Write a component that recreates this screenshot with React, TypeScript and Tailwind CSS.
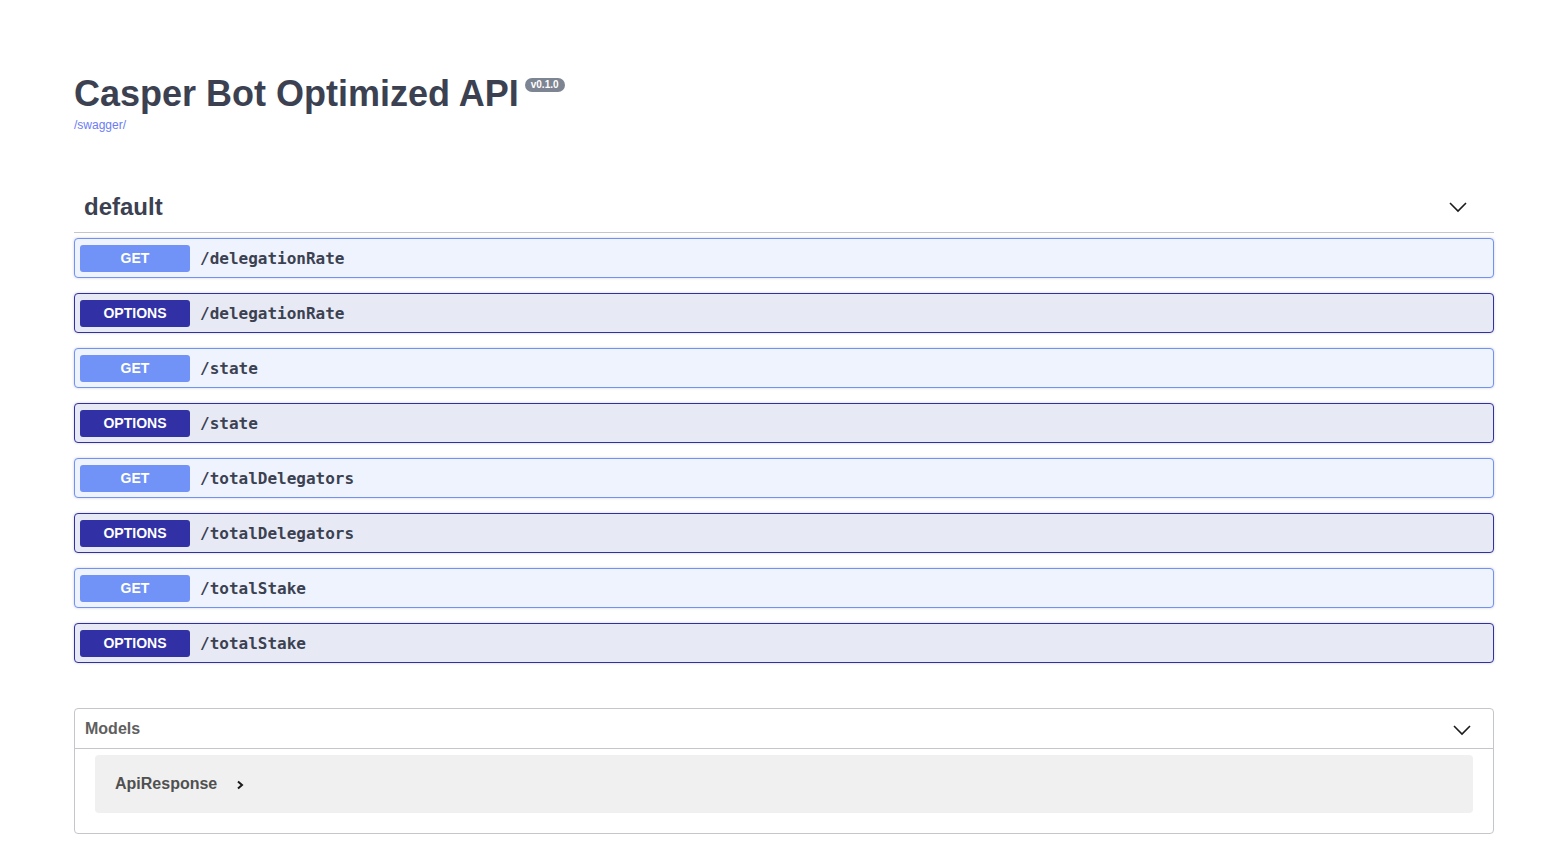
import React from 'react';

const sans = { fontFamily: '"Liberation Sans", Arial, sans-serif' };

type Op = { method: 'GET' | 'OPTIONS'; path: string };

const ops: Op[] = [
  { method: 'GET', path: '/delegationRate' },
  { method: 'OPTIONS', path: '/delegationRate' },
  { method: 'GET', path: '/state' },
  { method: 'OPTIONS', path: '/state' },
  { method: 'GET', path: '/totalDelegators' },
  { method: 'OPTIONS', path: '/totalDelegators' },
  { method: 'GET', path: '/totalStake' },
  { method: 'OPTIONS', path: '/totalStake' },
];

function ChevronDown({ className }: { className?: string }) {
  return (
    <svg viewBox="0 0 20 20" className={className} fill="none" stroke="currentColor" strokeWidth="1.6">
      <path d="M2 6 L10 14 L18 6" />
    </svg>
  );
}

function OpBlock({ op }: { op: Op }) {
  const isGet = op.method === 'GET';
  return (
    <div
      className={
        'flex h-10 items-center rounded-[4px] border px-[5px] shadow-[0_0_3px_rgba(0,0,0,0.19)] ' +
        (isGet ? 'border-[#7091f5] bg-[#eff3fe]' : 'border-[#3131a5] bg-[#e7eaf5]')
      }
    >
      <span
        className={
          'flex h-[27px] w-[110px] items-center justify-center rounded-[3px] text-[14px] font-bold text-white ' +
          (isGet ? 'bg-[#7193f7]' : 'bg-[#3131a5]')
        }
        style={sans}
      >
        {op.method}
      </span>
      <span
        className="ml-[10px] pt-[2px] text-[16px] font-bold text-[#3b4151]"
        style={{ fontFamily: '"DejaVu Sans Mono", monospace' }}
      >
        {op.path}
      </span>
    </div>
  );
}

export default function App() {
  return (
    <div className="min-h-screen bg-white" style={sans}>
      <div className="ml-[74px] w-[1420px]">
        {/* Info */}
        <div className="pt-[72px]">
          <div className="flex items-start">
            <h2 className="text-[36px] font-bold leading-[44px] text-[#3b4151]">Casper Bot Optimized API</h2>
            <span className="ml-[6px] mt-[6px] rounded-full bg-[#7d8492] px-[6px] py-[1px] text-[10px] font-bold leading-[12px] text-white">
              v0.1.0
            </span>
          </div>
          <a className="mt-[2px] block text-[12px] leading-[14px] text-[#6b7cf5]">/swagger/</a>
        </div>

        {/* default tag */}
        <div className="mt-[52px]">
          <div className="flex h-[49px] items-center border-b border-[#c4c6cb] pb-[3px] pl-[10px] pr-[26px]">
            <span className="text-[24px] font-bold text-[#3b4151]">default</span>
            <ChevronDown className="ml-auto h-[20px] w-[20px] text-[#1b1b1b]" />
          </div>
          <div className="mt-[5px] flex flex-col gap-[15px]">
            {ops.map((op, i) => (
              <OpBlock key={i} op={op} />
            ))}
          </div>
        </div>

        {/* Models */}
        <div className="mt-[45px] rounded-[4px] border border-[#c4c6cb]">
          <div className="flex h-[40px] items-center border-b border-[#c4c6cb] pl-[10px] pr-[21px]">
            <span className="text-[16px] font-bold text-[#606060]">Models</span>
            <ChevronDown className="ml-auto mt-[2px] h-[20px] w-[20px] text-[#1b1b1b]" />
          </div>
          <div className="px-[20px] pb-[20px] pt-[6px]">
            <div className="flex h-[58px] items-center rounded-[4px] bg-[#f0f0f0] pl-[20px]">
              <span className="text-[16px] font-bold text-[#505050]">ApiResponse</span>
              <svg viewBox="0 0 10 10" className="ml-[18px] mt-[2px] h-[10px] w-[10px] text-[#1b1b1b]" fill="none" stroke="currentColor" strokeWidth="2">
                <path d="M3 1.5 L7 5 L3 8.5" />
              </svg>
            </div>
          </div>
        </div>
      </div>
    </div>
  );
}
